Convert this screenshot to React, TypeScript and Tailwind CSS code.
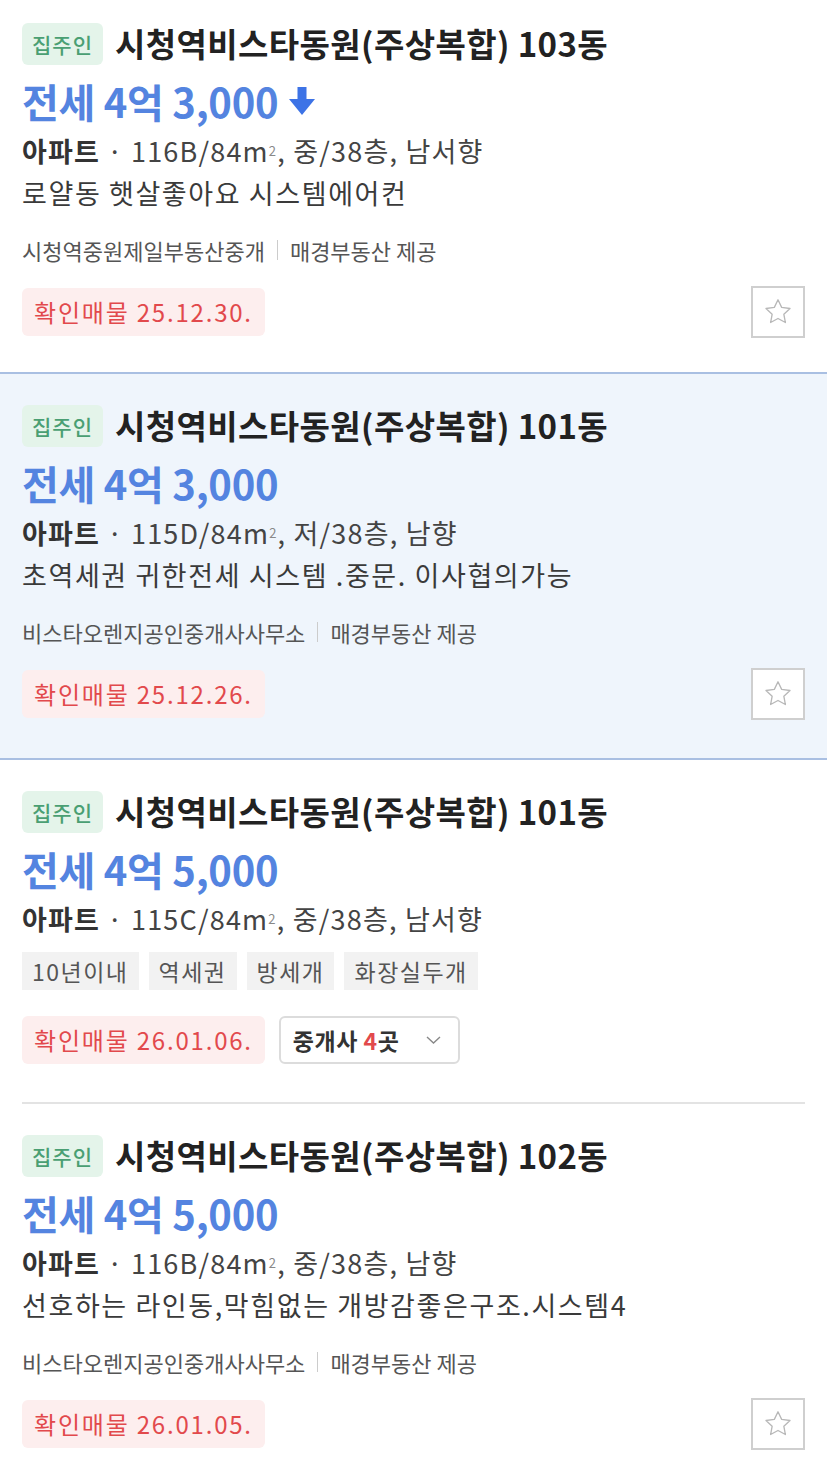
import React from 'react';

type Listing = {
  dong: string;
  price: string;
  priceDown?: boolean;
  spec: string;
  specTail: string;
  desc?: string;
  tags?: string[];
  broker?: string;
  confirmed: string;
  agents?: number;
  selected?: boolean;
};

const listings: Listing[] = [
  {
    dong: '103동',
    price: '전세 4억 3,000',
    priceDown: true,
    spec: '116B/84m',
    specTail: '중/38층, 남서향',
    desc: '로얄동 햇살좋아요 시스템에어컨',
    broker: '시청역중원제일부동산중개',
    confirmed: '25.12.30.',
  },
  {
    dong: '101동',
    price: '전세 4억 3,000',
    spec: '115D/84m',
    specTail: '저/38층, 남향',
    desc: '초역세권 귀한전세 시스템 .중문. 이사협의가능',
    broker: '비스타오렌지공인중개사사무소',
    confirmed: '25.12.26.',
    selected: true,
  },
  {
    dong: '101동',
    price: '전세 4억 5,000',
    spec: '115C/84m',
    specTail: '중/38층, 남서향',
    tags: ['10년이내', '역세권', '방세개', '화장실두개'],
    confirmed: '26.01.06.',
    agents: 4,
  },
  {
    dong: '102동',
    price: '전세 4억 5,000',
    spec: '116B/84m',
    specTail: '중/38층, 남향',
    desc: '선호하는 라인동,막힘없는 개방감좋은구조.시스템4',
    broker: '비스타오렌지공인중개사사무소',
    confirmed: '26.01.05.',
  },
];

const ArrowDown = () => (
  <svg width="28" height="30" viewBox="0 0 28 30" className="ml-[10px] shrink-0">
    <rect x="9.5" y="1" width="9" height="14" fill="#3d73e6" />
    <path d="M1 13 H27 L14 29 Z" fill="#3d73e6" />
  </svg>
);

const StarIcon = () => (
  <svg width="32" height="32" viewBox="0 0 24 24" fill="none" stroke="#b8b8b8" strokeWidth="1" strokeLinejoin="round">
    <path d="M12 2.8l2.75 5.75 6.25.8-4.6 4.35 1.15 6.2L12 16.9l-5.55 3 1.15-6.2L3 9.35l6.25-.8z" />
  </svg>
);

const Chevron = () => (
  <svg width="17" height="10" viewBox="0 0 17 10" fill="none" stroke="#888" strokeWidth="1.4">
    <path d="M2 2l6.5 6 6.5-6" />
  </svg>
);

const ListingCard: React.FC<{ item: Listing; first: boolean }> = ({ item, first }) => (
  <div
    className={
      item.selected
        ? 'bg-[#eff5fc] border-y-2 border-[#a9bfe2] px-[22px] pt-[30px] pb-[38px]'
        : first
        ? 'px-[22px] pt-[22px] pb-[34px]'
        : 'px-[22px] pt-[30px] pb-[38px]'
    }
  >
    <div className="flex items-center h-[44px]">
      <span className="h-[42px] px-[10px] rounded-[6px] bg-[#e4f4ea] text-[#4a9f73] text-[21px] leading-[42px] font-medium tracking-[1px]">
        집주인
      </span>
      <span className="ml-[12px] text-[33px] font-bold text-[#222] tracking-[0.4px]">
        시청역비스타동원(주상복합) {item.dong}
      </span>
    </div>
    <div className="mt-[12px] flex items-center h-[46px]">
      <span className="text-[40px] leading-[46px] font-bold text-[#5484e0] tracking-[-0.3px]">{item.price}</span>
      {item.priceDown && <ArrowDown />}
    </div>
    <div className="mt-[6px] text-[27px] leading-[42px] text-[#444] tracking-[1.2px]">
      <span className="font-bold text-[#333]">아파트</span>
      <span> · {item.spec}</span>
      <sup className="text-[13px] text-[#888]">2</sup>
      <span>, {item.specTail}</span>
    </div>
    {item.desc && (
      <div className="text-[27px] leading-[42px] text-[#3a3a3a] tracking-[1.6px]">{item.desc}</div>
    )}
    {item.tags && (
      <div className="mt-[12px] flex gap-[10px]">
        {item.tags.map((t) => (
          <span key={t} className="h-[38px] px-[10px] bg-[#f2f2f2] text-[#555] text-[23px] leading-[38px] tracking-[1.5px]">
            {t}
          </span>
        ))}
      </div>
    )}
    {item.broker && (
      <div className="mt-[20px] flex items-center text-[22px] leading-[32px] text-[#555]">
        <span>{item.broker}</span>
        <span className="mx-[12px] w-[1px] h-[20px] bg-[#ccc]" />
        <span>매경부동산 제공</span>
      </div>
    )}
    <div className={item.tags ? 'mt-[26px] flex items-center' : 'mt-[20px] flex items-center'}>
      <span className="h-[48px] px-[12px] rounded-[6px] bg-[#fdeeee] text-[#e2494c] text-[24px] leading-[48px] tracking-[1.8px]">
        확인매물 {item.confirmed}
      </span>
      {item.agents && (
        <span className="ml-[14px] h-[48px] w-[181px] flex items-center justify-between pl-[12px] pr-[16px] border-2 border-[#dcdcdc] rounded-[6px] bg-white">
          <span className="text-[23px] font-bold text-[#333] tracking-[0.5px]">
            중개사 <span className="text-[#e2494c]">{item.agents}</span>곳
          </span>
          <Chevron />
        </span>
      )}
      {!item.agents && (
        <span className="ml-auto w-[54px] h-[52px] border-2 border-[#cfcfcf] flex items-center justify-center bg-white">
          <StarIcon />
        </span>
      )}
    </div>
  </div>
);

export default function App() {
  return (
    <div
      className="w-[827px] bg-white"
      style={{ fontFamily: '"Noto Sans CJK KR", "Noto Sans", sans-serif' }}
    >
      {listings.map((item, i) => (
        <React.Fragment key={i}>
          {i === 3 && <div className="mx-[22px] h-[2px] bg-[#e3e3e3]" />}
          <ListingCard item={item} first={i === 0} />
        </React.Fragment>
      ))}
    </div>
  );
}
